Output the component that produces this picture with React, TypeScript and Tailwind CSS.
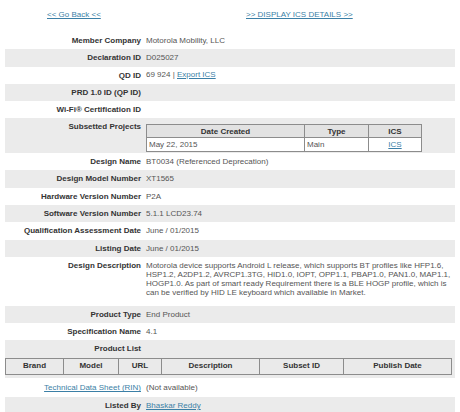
const FONT = { fontFamily: '"Liberation Sans", Arial, sans-serif' };

type Row = { label: React.ReactNode; value?: React.ReactNode; h?: string };

function Link({ children }: { children: React.ReactNode }) {
  return <a className="text-[#3b7fa6] underline underline-offset-1 cursor-pointer">{children}</a>;
}

function SubsetTable() {
  return (
    <table className="mt-[3px] w-[276px] border border-[#6f6f6f] border-collapse text-[8px]">
      <thead>
        <tr className="h-[13px] bg-[#e2e2e2] text-[#333] font-bold">
          <th className="w-[158px] border border-[#8c8c8c] font-bold">Date Created</th>
          <th className="w-[64px] border border-[#8c8c8c] font-bold">Type</th>
          <th className="border border-[#8c8c8c] font-bold">ICS</th>
        </tr>
      </thead>
      <tbody>
        <tr className="h-[14px] bg-white text-[#555]">
          <td className="border border-[#8c8c8c] pl-[2px]">May 22, 2015</td>
          <td className="border border-[#8c8c8c] pl-[2px]">Main</td>
          <td className="border border-[#8c8c8c] text-center"><Link>ICS</Link></td>
        </tr>
      </tbody>
    </table>
  );
}

function ProductTable() {
  const cols = [
    ['Brand', 'w-[58px]'],
    ['Model', 'w-[55px]'],
    ['URL', 'w-[43px]'],
    ['Description', 'w-[98px]'],
    ['Subset ID', 'w-[84px]'],
    ['Publish Date', ''],
  ];
  return (
    <table className="w-[447px] border border-[#6f6f6f] border-collapse text-[8px]">
      <thead>
        <tr className="h-[16px] bg-[#eaeaea] text-[#333]">
          {cols.map(([c, w]) => (
            <th key={c} className={`${w} border border-[#8c8c8c] font-bold`}>{c}</th>
          ))}
        </tr>
      </thead>
    </table>
  );
}

const rows: Row[] = [
  { label: 'Member Company', value: 'Motorola Mobility, LLC' },
  { label: 'Declaration ID', value: 'D025027' },
  { label: 'QD ID', value: <>69 924 | <Link>Export ICS</Link></> },
  { label: 'PRD 1.0 ID (QP ID)' },
  { label: 'Wi-Fi® Certification ID' },
  { label: 'Subsetted Projects', value: <SubsetTable />, h: 'h-[34.6px]' },
  { label: 'Design Name', value: 'BT0034 (Referenced Deprecation)' },
  { label: 'Design Model Number', value: 'XT1565' },
  { label: 'Hardware Version Number', value: 'P2A' },
  { label: 'Software Version Number', value: '5.1.1 LCD23.74' },
  { label: 'Qualification Assessment Date', value: 'June / 01/2015' },
  { label: 'Listing Date', value: 'June / 01/2015' },
  {
    label: 'Design Description',
    h: 'h-[49px]',
    value: (
      <div className="leading-[9px] pt-[1px]">
        Motorola device supports Android L release, which supports BT profiles like HFP1.6,
        <br />
        HSP1.2, A2DP1.2, AVRCP1.3TG, HID1.0, IOPT, OPP1.1, PBAP1.0, PAN1.0, MAP1.1,
        <br />
        HOGP1.0. As part of smart ready Requirement there is a BLE HOGP profile, which is
        <br />
        can be verified by HID LE keyboard which available in Market.
      </div>
    ),
  },
  { label: 'Product Type', value: 'End Product' },
  { label: 'Specification Name', value: '4.1' },
  { label: 'Product List' },
];

export default function App() {
  return (
    <div className="w-[460px] h-[412px] overflow-hidden bg-white text-[8px] text-[#555]" style={FONT}>
      <div className="flex h-[32px] items-start pt-[9px]">
        <div className="pl-[47px] w-[246px]"><Link>&lt;&lt; Go Back &lt;&lt;</Link></div>
        <div><Link>&gt;&gt; DISPLAY ICS DETAILS &gt;&gt;</Link></div>
      </div>
      <div className="mx-[5px] w-[450px]">
        {rows.map((r, i) => (
          <div
            key={i}
            className={`flex ${r.h ?? 'h-[17.3px]'} ${i % 2 === 1 ? 'bg-[#ebebeb]' : 'bg-white'}`}
          >
            <div className="w-[137px] shrink-0 text-right font-bold text-[#333] pr-[1px] pt-[4px] leading-[9px]">
              {r.label}
            </div>
            <div className={`flex-1 pl-[4px] ${typeof r.value === 'string' ? 'pt-[4px] leading-[9px]' : 'pt-[3px] leading-[9px]'}`}>
              {r.value}
            </div>
          </div>
        ))}
        <div className="h-[20.6px] bg-[#ebebeb] pt-[0px]">
          <ProductTable />
        </div>
        <div className="flex h-[18.6px] bg-white">
          <div className="w-[137px] shrink-0 text-right pr-[1px] pt-[5px] leading-[9px]">
            <Link>Technical Data Sheet (RIN)</Link>
          </div>
          <div className="flex-1 pl-[4px] pt-[5px] leading-[9px]">(Not available)</div>
        </div>
        <div className="flex h-[17.3px] bg-[#ebebeb]">
          <div className="w-[137px] shrink-0 text-right font-bold text-[#333] pr-[1px] pt-[4px] leading-[9px]">
            Listed By
          </div>
          <div className="flex-1 pl-[4px] pt-[4px] leading-[9px]"><Link>Bhaskar Reddy</Link></div>
        </div>
      </div>
    </div>
  );
}
